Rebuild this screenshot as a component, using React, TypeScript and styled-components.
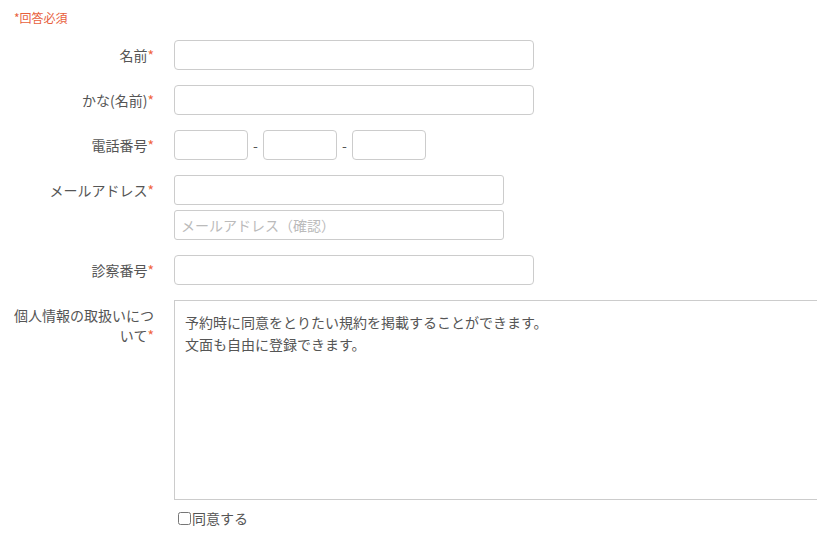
import styled, { createGlobalStyle } from 'styled-components';

const GlobalStyle = createGlobalStyle`
  body {
    margin: 0;
    background: #fff;
    overflow: hidden;
    font-family: 'Noto Sans CJK JP', 'Noto Sans', sans-serif;
    color: #555;
  }
`;

const Page = styled.form`
  padding: 10px 0 0 14px;
  width: 900px;
`;

const Note = styled.div`
  font-size: 12px;
  line-height: 16px;
  color: #e8603c;
  margin-bottom: 14px;
`;

const Row = styled.div`
  display: flex;
  align-items: flex-start;
  gap: 20px;
  margin-bottom: 15px;
`;

const Label = styled.label`
  width: 140px;
  flex-shrink: 0;
  padding-top: 5px;
  font-size: 14px;
  line-height: 20px;
  text-align: right;
  color: #555;
`;

const Req = styled.span`
  color: #f0643c;
`;

const Stack = styled.div`
  display: flex;
  flex-direction: column;
  gap: 5px;
`;

const Input = styled.input<{ $w: number; $r?: number }>`
  box-sizing: border-box;
  width: ${(p) => p.$w}px;
  height: 30px;
  padding: 0 6px;
  border: 1px solid #ccc;
  border-radius: ${(p) => p.$r ?? 4}px;
  font-family: inherit;
  font-size: 14px;
  color: #555;
  outline: none;
  &::placeholder {
    color: #bbb;
  }
`;

const Phone = styled.div`
  display: flex;
  align-items: center;
  gap: 4px;
`;

const Dash = styled.span`
  font-size: 14px;
  width: 7px;
  text-align: center;
  color: #555;
`;

const Terms = styled.div`
  box-sizing: border-box;
  width: 700px;
  height: 200px;
  padding: 10px;
  border: 1px solid #ccc;
  font-size: 14px;
  line-height: 22px;
  color: #555;
  white-space: pre-line;
`;

const Agree = styled.label`
  display: flex;
  align-items: center;
  margin: -7px 0 0 160px;
  font-size: 14px;
  color: #555;
  input {
    margin: 3px 1px 3px 4px;
  }
`;

export default function App() {
  return (
    <>
      <GlobalStyle />
      <Page>
        <Note>*回答必須</Note>
        <Row>
          <Label>名前<Req>*</Req></Label>
          <Input $w={360} />
        </Row>
        <Row>
          <Label>かな(名前)<Req>*</Req></Label>
          <Input $w={360} />
        </Row>
        <Row>
          <Label>電話番号<Req>*</Req></Label>
          <Phone>
            <Input $w={74} />
            <Dash>-</Dash>
            <Input $w={74} />
            <Dash>-</Dash>
            <Input $w={74} />
          </Phone>
        </Row>
        <Row>
          <Label>メールアドレス<Req>*</Req></Label>
          <Stack>
            <Input $w={330} $r={3} />
            <Input $w={330} $r={3} placeholder="メールアドレス（確認）" />
          </Stack>
        </Row>
        <Row>
          <Label>診察番号<Req>*</Req></Label>
          <Input $w={360} />
        </Row>
        <Row>
          <Label>個人情報の取扱いについて<Req>*</Req></Label>
          <Terms>
            {'予約時に同意をとりたい規約を掲載することができます。\n文面も自由に登録できます。'}
          </Terms>
        </Row>
        <Agree>
          <input type="checkbox" />
          同意する
        </Agree>
      </Page>
    </>
  );
}
